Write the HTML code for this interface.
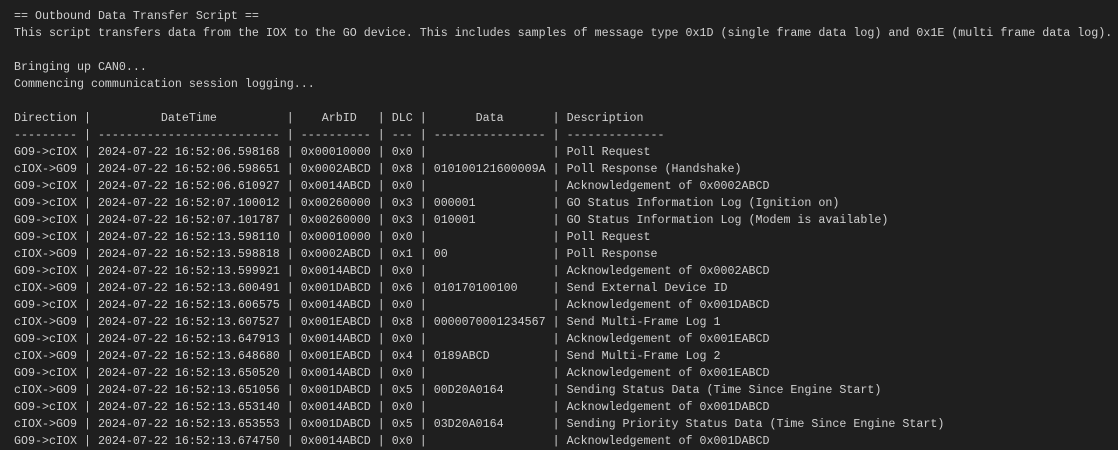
<!DOCTYPE html>
<html><head><style>
html,body{margin:0;padding:0;background:#1f1f1f;width:1118px;height:450px;overflow:hidden}
pre{margin:0;position:absolute;left:14px;top:8px;font-family:"Liberation Mono",monospace;font-size:11.67px;line-height:17px;color:#d0d0d0;white-space:pre}
</style></head><body><pre>== Outbound Data Transfer Script ==
This script transfers data from the IOX to the GO device. This includes samples of message type 0x1D (single frame data log) and 0x1E (multi frame data log).

Bringing up CAN0...
Commencing communication session logging...

Direction |          DateTime          |    ArbID   | DLC |       Data       | Description
--------- | -------------------------- | ---------- | --- | ---------------- | --------------
GO9->cIOX | 2024-07-22 16:52:06.598168 | 0x00010000 | 0x0 |                  | Poll Request
cIOX->GO9 | 2024-07-22 16:52:06.598651 | 0x0002ABCD | 0x8 | 010100121600009A | Poll Response (Handshake)
GO9->cIOX | 2024-07-22 16:52:06.610927 | 0x0014ABCD | 0x0 |                  | Acknowledgement of 0x0002ABCD
GO9->cIOX | 2024-07-22 16:52:07.100012 | 0x00260000 | 0x3 | 000001           | GO Status Information Log (Ignition on)
GO9->cIOX | 2024-07-22 16:52:07.101787 | 0x00260000 | 0x3 | 010001           | GO Status Information Log (Modem is available)
GO9->cIOX | 2024-07-22 16:52:13.598110 | 0x00010000 | 0x0 |                  | Poll Request
cIOX->GO9 | 2024-07-22 16:52:13.598818 | 0x0002ABCD | 0x1 | 00               | Poll Response
GO9->cIOX | 2024-07-22 16:52:13.599921 | 0x0014ABCD | 0x0 |                  | Acknowledgement of 0x0002ABCD
cIOX->GO9 | 2024-07-22 16:52:13.600491 | 0x001DABCD | 0x6 | 010170100100     | Send External Device ID
GO9->cIOX | 2024-07-22 16:52:13.606575 | 0x0014ABCD | 0x0 |                  | Acknowledgement of 0x001DABCD
cIOX->GO9 | 2024-07-22 16:52:13.607527 | 0x001EABCD | 0x8 | 0000070001234567 | Send Multi-Frame Log 1
GO9->cIOX | 2024-07-22 16:52:13.647913 | 0x0014ABCD | 0x0 |                  | Acknowledgement of 0x001EABCD
cIOX->GO9 | 2024-07-22 16:52:13.648680 | 0x001EABCD | 0x4 | 0189ABCD         | Send Multi-Frame Log 2
GO9->cIOX | 2024-07-22 16:52:13.650520 | 0x0014ABCD | 0x0 |                  | Acknowledgement of 0x001EABCD
cIOX->GO9 | 2024-07-22 16:52:13.651056 | 0x001DABCD | 0x5 | 00D20A0164       | Sending Status Data (Time Since Engine Start)
GO9->cIOX | 2024-07-22 16:52:13.653140 | 0x0014ABCD | 0x0 |                  | Acknowledgement of 0x001DABCD
cIOX->GO9 | 2024-07-22 16:52:13.653553 | 0x001DABCD | 0x5 | 03D20A0164       | Sending Priority Status Data (Time Since Engine Start)
GO9->cIOX | 2024-07-22 16:52:13.674750 | 0x0014ABCD | 0x0 |                  | Acknowledgement of 0x001DABCD</pre></body></html>
